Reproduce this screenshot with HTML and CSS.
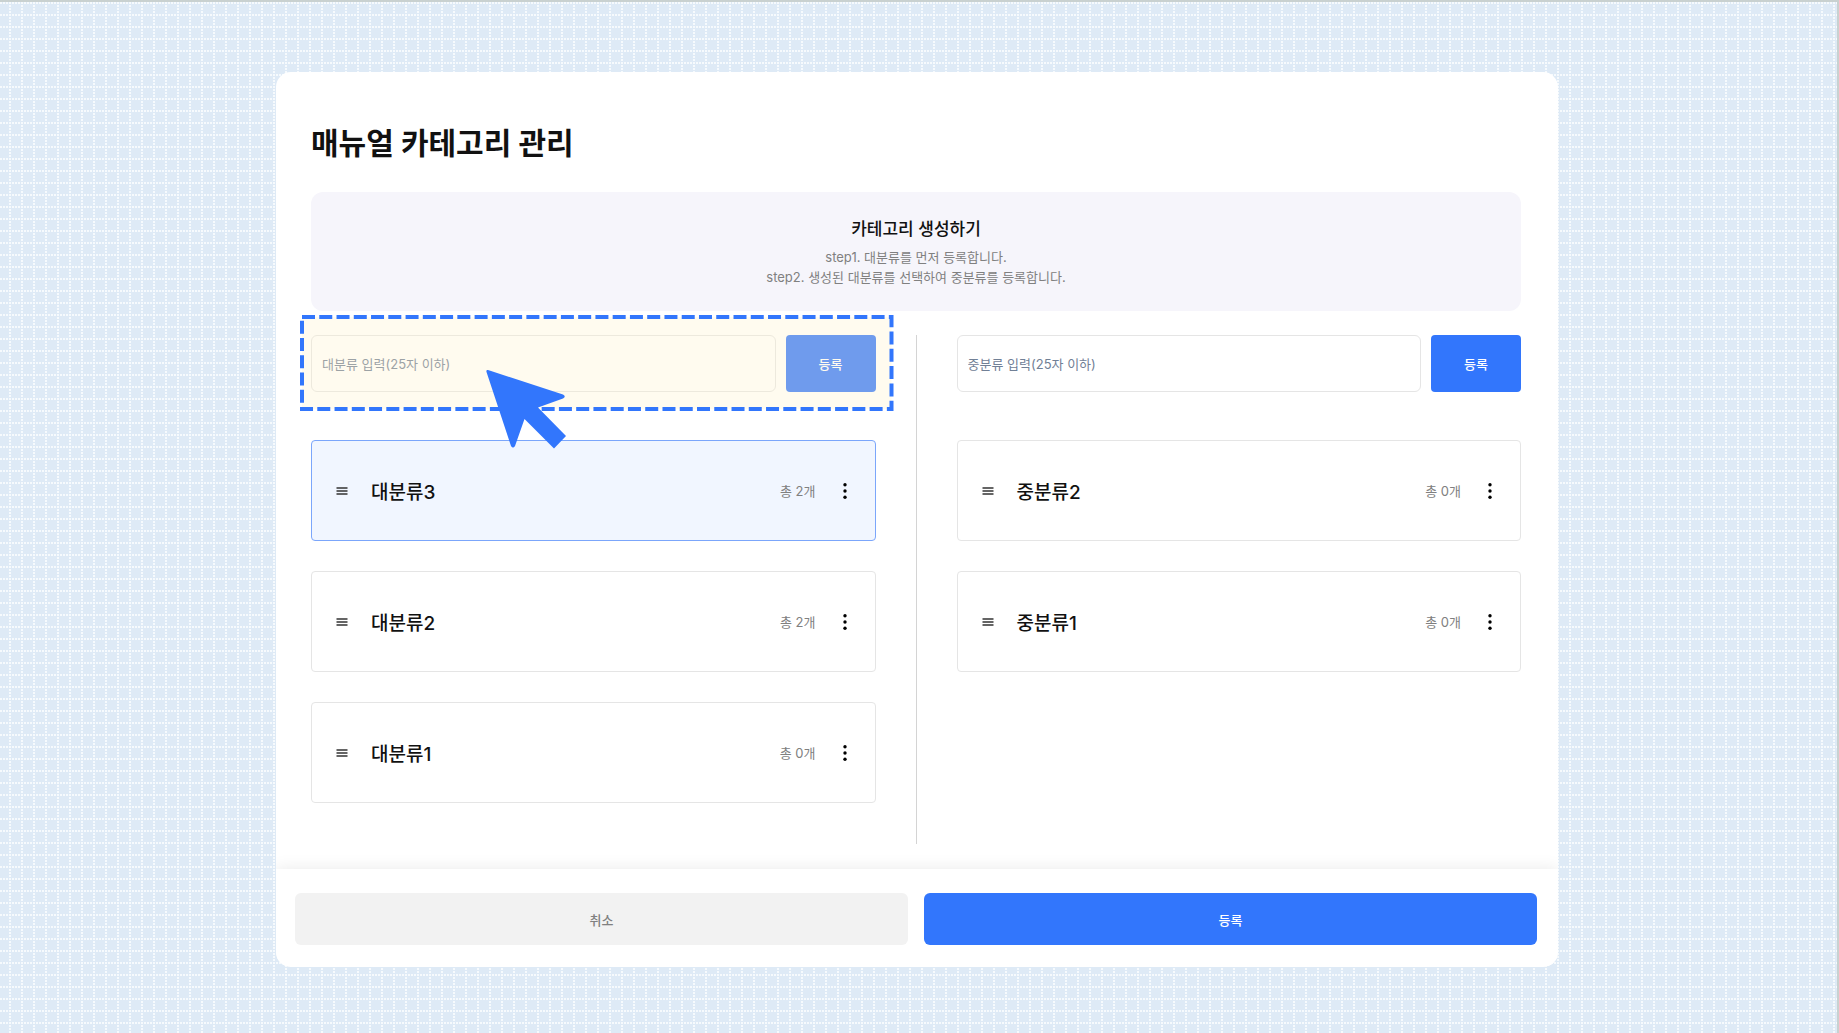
FILE: index.html
```html
<!DOCTYPE html>
<html lang="ko">
<head>
    <meta charset="UTF-8">
    <meta name="viewport" content="width=device-width, initial-scale=1.0">
    <title>매뉴얼 카테고리 관리</title>
    <link rel="stylesheet" href="styles.css">
</head>
<body>
    <!-- Icons -->
    <svg class="sprite" aria-hidden="true">
        <symbol id="icon-drag" viewBox="0 0 12 12">
            <path d="M0.5 3h11M0.5 6h11M0.5 9h11" stroke="#333" stroke-width="1.4" fill="none"/>
        </symbol>
        <symbol id="icon-more" viewBox="0 0 6 18">
            <circle cx="3" cy="2.7" r="1.7"/>
            <circle cx="3" cy="9" r="1.7"/>
            <circle cx="3" cy="15.3" r="1.7"/>
        </symbol>
    </svg>

    <main class="panel">
        <div class="content">
            <h1>매뉴얼 카테고리 관리</h1>

            <section class="guide">
                <h2>카테고리 생성하기</h2>
                <p>step1. 대분류를 먼저 등록합니다.</p>
                <p>step2. 생성된 대분류를 선택하여 중분류를 등록합니다.</p>
            </section>

            <div class="columns">
                <section class="column">
                    <form class="add-form">
                        <input type="text" class="add-input" placeholder="대분류 입력(25자 이하)" aria-label="대분류 입력" maxlength="25">
                        <button type="button" class="add-button">등록</button>
                        <div class="highlight">
                            <svg class="highlight-frame" aria-hidden="true"><rect class="dashes" x="2" y="2"/></svg>
                            <svg class="pointer" viewBox="0 0 82 82" aria-hidden="true">
                                <path d="M3 2 78 26.500Q81.500 28.500 78 30.500L53 39.500 81 68 69 80.500 39.500 51 30 78Q28 81 26 78L1.500 4Q1 1.500 3 2Z"/>
                            </svg>
                        </div>
                    </form>
                    <ul class="list">
                        <li class="item selected">
                            <svg class="drag"><use href="#icon-drag"/></svg>
                            <span class="name">대분류3</span>
                            <span class="count">총 2개</span>
                            <button type="button" class="more" aria-label="더보기"><svg><use href="#icon-more"/></svg></button>
                        </li>
                        <li class="item">
                            <svg class="drag"><use href="#icon-drag"/></svg>
                            <span class="name">대분류2</span>
                            <span class="count">총 2개</span>
                            <button type="button" class="more" aria-label="더보기"><svg><use href="#icon-more"/></svg></button>
                        </li>
                        <li class="item">
                            <svg class="drag"><use href="#icon-drag"/></svg>
                            <span class="name">대분류1</span>
                            <span class="count">총 0개</span>
                            <button type="button" class="more" aria-label="더보기"><svg><use href="#icon-more"/></svg></button>
                        </li>
                    </ul>
                </section>

                <div class="divider"></div>

                <section class="column">
                    <form class="add-form">
                        <input type="text" class="add-input" placeholder="중분류 입력(25자 이하)" aria-label="중분류 입력" maxlength="25">
                        <button type="button" class="add-button">등록</button>
                    </form>
                    <ul class="list">
                        <li class="item">
                            <svg class="drag"><use href="#icon-drag"/></svg>
                            <span class="name">중분류2</span>
                            <span class="count">총 0개</span>
                            <button type="button" class="more" aria-label="더보기"><svg><use href="#icon-more"/></svg></button>
                        </li>
                        <li class="item">
                            <svg class="drag"><use href="#icon-drag"/></svg>
                            <span class="name">중분류1</span>
                            <span class="count">총 0개</span>
                            <button type="button" class="more" aria-label="더보기"><svg><use href="#icon-more"/></svg></button>
                        </li>
                    </ul>
                </section>
            </div>
        </div>

        <footer class="actions">
            <button type="button" class="cancel">취소</button>
            <button type="button" class="submit">등록</button>
        </footer>
    </main>
</body>
</html>
```
FILE: styles.css
```css
* {
    box-sizing: border-box;
}

body {
    margin: 0;
    min-height: 100vh;
    padding: 70px 279px 64px 276px;
    border-top: 2px solid #c9d1d0;
    border-right: 2px solid #c9d1d0;
    font-family: 'Inter', 'Noto Sans CJK KR', sans-serif;
    font-size: 13px;
    color: #111;
    background-color: #deeaf6;
    /* dotted 12px grid */
    background-image: url("data:image/svg+xml,%3Csvg xmlns='http://www.w3.org/2000/svg' width='12' height='12'%3E%3Cpath fill='%23f6fafd' d='M0 0h2v2H0zM3 0h2v2H3zM6 0h2v2H6zM9 0h2v2H9zM9 3h2v2H9zM9 6h2v2H9zM9 9h2v2H9z'/%3E%3C/svg%3E");
    background-position: 0 2px;
}

h1, h2, p, ul {
    margin: 0;
    padding: 0;
}

button, input {
    font-family: inherit;
    font-size: inherit;
}

button {
    padding: 0;
    border: none;
    cursor: pointer;
}

.sprite {
    display: none;
}

.panel {
    overflow: hidden;
    border-radius: 15px;
    background: #fff;
}

.content {
    padding: 48px 37px 25px 35px;
}

h1 {
    font-size: 30px;
    line-height: 46px;
    font-weight: 700;
}

/* Guide */
.guide {
    margin: 26px 0 24px;
    padding: 24px 20px;
    border-radius: 12px;
    background: #f6f5fb;
    text-align: center;
}

.guide h2 {
    margin-bottom: 5px;
    font-size: 17px;
    line-height: 26px;
    font-weight: 500;
}

.guide p {
    line-height: 20px;
    color: #808080;
}

/* Columns */
.columns {
    display: grid;
    grid-template-columns: 1fr 1px 1fr;
    gap: 40px;
}

.divider {
    background: #d4d4d4;
}

.column {
    padding-bottom: 41px;
}

.add-form {
    position: relative;
    display: flex;
    gap: 10px;
    margin-bottom: 48px;
}

.add-input {
    flex: 1;
    min-width: 0;
    height: 57px;
    padding: 0 10px;
    border: 1px solid #e5e5e5;
    border-radius: 6px;
    background: #fff;
}

.add-input::placeholder {
    color: #718096;
    opacity: 1;
}

.add-button {
    width: 90px;
    border-radius: 4px;
    background: #3276fc;
    color: #fff;
    font-weight: 500;
}

.highlight {
    position: absolute;
    inset: -20px -18px -19px -11px;
    pointer-events: none;
}

.highlight-frame {
    display: block;
    width: 100%;
    height: 100%;
}

.dashes {
    width: calc(100% - 4px);
    height: calc(100% - 4px);
    fill: rgba(255, 242, 202, 0.3);
    stroke: #3276fc;
    stroke-width: 4;
    stroke-dasharray: 13 4.26;
}

.pointer {
    position: absolute;
    top: 53px;
    left: 185px;
    width: 82px;
    height: 82px;
    fill: #3276fc;
}

.list {
    display: flex;
    flex-direction: column;
    gap: 30px;
    list-style: none;
}

.item {
    display: flex;
    align-items: center;
    height: 101px;
    padding: 0 24px;
    border: 1px solid #e5e5e5;
    border-radius: 4px;
}

.item.selected {
    border-color: #7ba6fb;
    background: #f1f6ff;
}

.drag {
    width: 12px;
    height: 12px;
}

.name {
    flex: 1;
    margin-left: 23px;
    font-size: 19px;
    font-weight: 500;
}

.count {
    color: #808080;
}

.more {
    margin-left: 23px;
    width: 12px;
    height: 24px;
    background: none;
}

.more svg {
    display: block;
    margin: auto;
    width: 6px;
    height: 18px;
}

/* Bottom buttons */
.actions {
    position: relative;
    display: grid;
    grid-template-columns: 1fr 1fr;
    gap: 16px;
    padding: 24px 21px 22px 19px;
    background: #fff;
    box-shadow: 0 0 16px rgba(0, 0, 0, 0.09);
}

.actions button {
    height: 52px;
    border-radius: 6px;
    font-weight: 500;
}

.cancel {
    background: #f2f2f2;
    color: #808080;
}

.submit {
    background: #3276fc;
    color: #fff;
}
```
